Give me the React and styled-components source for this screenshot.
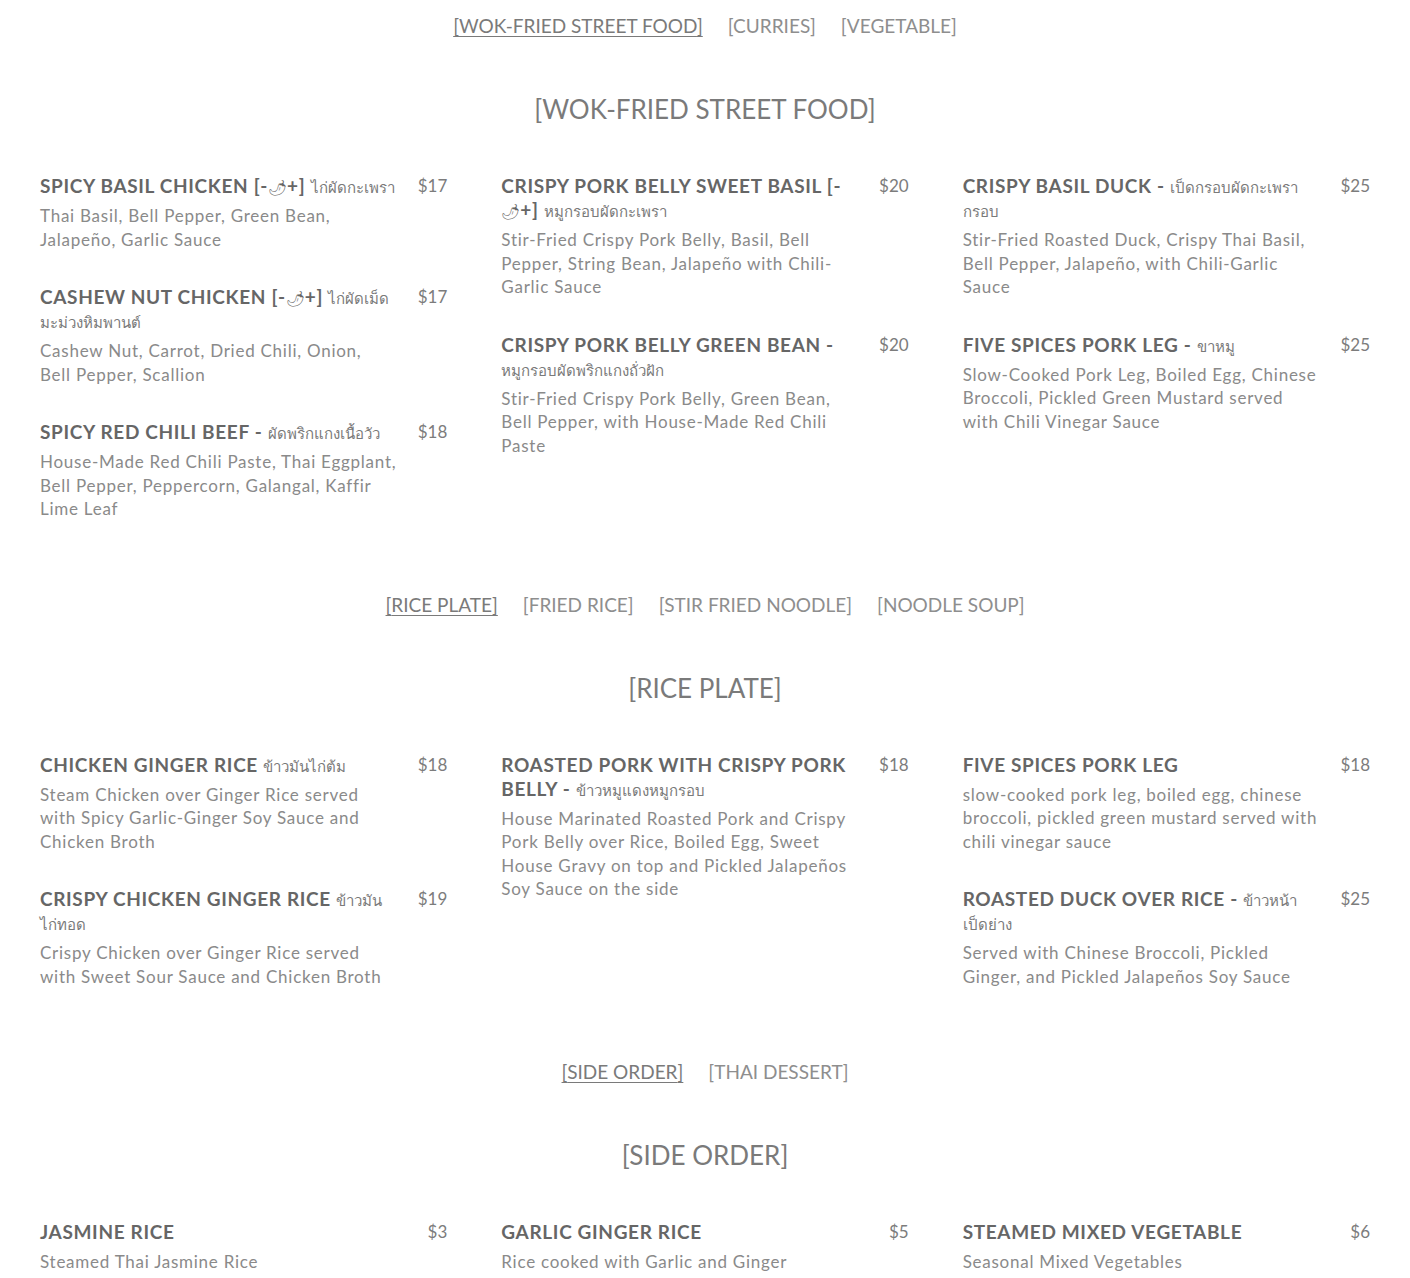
import React from 'react'
import styled, { createGlobalStyle } from 'styled-components';

const GlobalStyle = createGlobalStyle`
  * { box-sizing: border-box; }
  body {
    margin: 0;
    background: #fff;
    font-family: Lato, "Open Sans", sans-serif;
  }
`

const Page = styled.main`
  padding: 12px 40px 40px;
`

const Section = styled.section`
  margin-bottom: 70px;
`

const TabBar = styled.nav`
  display: flex;
  justify-content: center;
  gap: 25px;
`

const Tab = styled.a`
  font-size: 19px;
  line-height: 28px;
  color: ${props => props.$active ? '#7a7a7a' : '#8e8e8e'};
  text-decoration: ${props => props.$active ? 'underline' : 'none'};
  text-decoration-thickness: 1px;
  text-underline-offset: 3px;
  cursor: pointer;
`

const Title = styled.h2`
  margin: 52px 0 48px;
  text-align: center;
  font-size: 26px;
  line-height: 34px;
  font-weight: 400;
  color: #7a7a7a;
`

const Grid = styled.div`
  display: grid;
  grid-template-columns: repeat(3, 1fr);
  column-gap: 54px;
  align-items: start;
`

const Column = styled.div`
  display: flex;
  flex-direction: column;
  gap: 34px;
`

const Item = styled.div`
  display: flex;
  justify-content: space-between;
  align-items: flex-start;
`

const Text = styled.div`
  width: 357px;
`

const Name = styled.h3`
  margin: 0;
  font-size: 19px;
  line-height: 24px;
  font-weight: 700;
  letter-spacing: 0.65px;
  color: #666;
  text-transform: uppercase;
`

const Chili = styled.span`
  font-size: 15px;
  line-height: 1;
  font-weight: 400;
  letter-spacing: 0;
`

const Thai = styled.span`
  font-size: 15px;
  line-height: 1;
  font-weight: 400;
  letter-spacing: 0;
  color: #7a7a7a;
`

const Desc = styled.p`
  margin: 6px 0 0;
  font-size: 17px;
  line-height: 23.5px;
  letter-spacing: 0.75px;
  color: #8a8a8a;
`

const Price = styled.span`
  font-size: 17px;
  line-height: 24px;
  color: #7c7c7c;
`

const sections = [
  {
    tabs: ['WOK-FRIED STREET FOOD', 'CURRIES', 'VEGETABLE'],
    title: 'WOK-FRIED STREET FOOD',
    columns: [
      [
        { name: 'SPICY BASIL CHICKEN', spicy: true, th: 'ไก่ผัดกะเพรา', price: 17, desc: 'Thai Basil, Bell Pepper, Green Bean, Jalapeño, Garlic Sauce' },
        { name: 'CASHEW NUT CHICKEN', spicy: true, th: 'ไก่ผัดเม็ดมะม่วงหิมพานต์', price: 17, desc: 'Cashew Nut, Carrot, Dried Chili, Onion, Bell Pepper, Scallion' },
        { name: 'SPICY RED CHILI BEEF -', th: 'ผัดพริกแกงเนื้อวัว', price: 18, desc: 'House-Made Red Chili Paste, Thai Eggplant, Bell Pepper, Peppercorn, Galangal, Kaffir Lime Leaf' },
      ],
      [
        { name: 'CRISPY PORK BELLY SWEET BASIL', spicy: true, th: 'หมูกรอบผัดกะเพรา', price: 20, desc: 'Stir-Fried Crispy Pork Belly, Basil, Bell Pepper, String Bean, Jalapeño with Chili-Garlic Sauce' },
        { name: 'CRISPY PORK BELLY GREEN BEAN -', th: 'หมูกรอบผัดพริกแกงถั่วฝัก', price: 20, desc: 'Stir-Fried Crispy Pork Belly, Green Bean, Bell Pepper, with House-Made Red Chili Paste' },
      ],
      [
        { name: 'CRISPY BASIL DUCK -', th: 'เป็ดกรอบผัดกะเพรากรอบ', price: 25, desc: 'Stir-Fried Roasted Duck, Crispy Thai Basil, Bell Pepper, Jalapeño, with Chili-Garlic Sauce' },
        { name: 'FIVE SPICES PORK LEG -', th: 'ขาหมู', price: 25, desc: 'Slow-Cooked Pork Leg, Boiled Egg, Chinese Broccoli, Pickled Green Mustard served with Chili Vinegar Sauce' },
      ],
    ],
  },
  {
    tabs: ['RICE PLATE', 'FRIED RICE', 'STIR FRIED NOODLE', 'NOODLE SOUP'],
    title: 'RICE PLATE',
    columns: [
      [
        { name: 'CHICKEN GINGER RICE', th: 'ข้าวมันไก่ต้ม', price: 18, desc: 'Steam Chicken over Ginger Rice served with Spicy Garlic-Ginger Soy Sauce and Chicken Broth' },
        { name: 'CRISPY CHICKEN GINGER RICE', th: 'ข้าวมันไก่ทอด', price: 19, desc: 'Crispy Chicken over Ginger Rice served with Sweet Sour Sauce and Chicken Broth' },
      ],
      [
        { name: 'ROASTED PORK WITH CRISPY PORK BELLY -', th: 'ข้าวหมูแดงหมูกรอบ', price: 18, desc: 'House Marinated Roasted Pork and Crispy Pork Belly over Rice, Boiled Egg, Sweet House Gravy on top and Pickled Jalapeños Soy Sauce on the side' },
      ],
      [
        { name: 'FIVE SPICES PORK LEG', price: 18, desc: 'slow-cooked pork leg, boiled egg, chinese broccoli, pickled green mustard served with chili vinegar sauce' },
        { name: 'ROASTED DUCK OVER RICE -', th: 'ข้าวหน้าเป็ดย่าง', price: 25, desc: 'Served with Chinese Broccoli, Pickled Ginger, and Pickled Jalapeños Soy Sauce' },
      ],
    ],
  },
  {
    tabs: ['SIDE ORDER', 'THAI DESSERT'],
    title: 'SIDE ORDER',
    columns: [
      [{ name: 'JASMINE RICE', price: 3, desc: 'Steamed Thai Jasmine Rice' }],
      [{ name: 'GARLIC GINGER RICE', price: 5, desc: 'Rice cooked with Garlic and Ginger' }],
      [{ name: 'STEAMED MIXED VEGETABLE', price: 6, desc: 'Seasonal Mixed Vegetables' }],
    ],
  },
]

const MenuItem = ({ name, spicy, th, price, desc }) => (
  <Item>
    <Text>
      <Name>
        {name}
        {spicy && <> [-<Chili>🌶</Chili>+]</>}
        {th && <> <Thai>{th}</Thai></>}
      </Name>
      <Desc>{desc}</Desc>
    </Text>
    <Price>${price}</Price>
  </Item>
)

const MenuSection = ({ tabs, title, columns }) => (
  <Section>
    <TabBar>
      {tabs.map((t, i) => (
        <Tab key={t} $active={i === 0}>[{t}]</Tab>
      ))}
    </TabBar>
    <Title>[{title}]</Title>
    <Grid>
      {columns.map((col, i) => (
        <Column key={i}>
          {col.map(item => <MenuItem key={item.name} {...item} />)}
        </Column>
      ))}
    </Grid>
  </Section>
)

const App = () => {
  return (
    <>
      <GlobalStyle />
      <Page>
        {sections.map(s => <MenuSection key={s.title} {...s} />)}
      </Page>
    </>
  )
}

export default App
